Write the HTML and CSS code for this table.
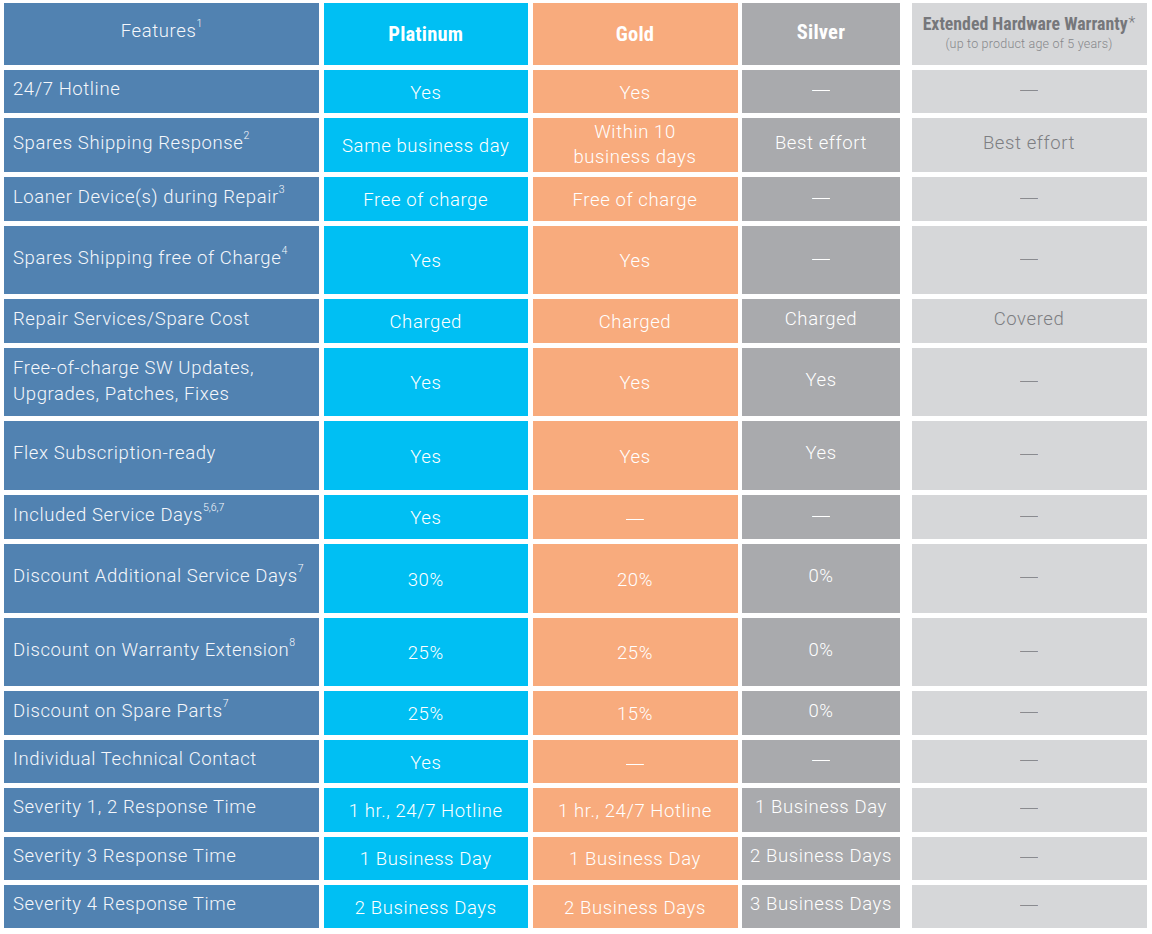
FILE: index.html
```html
<!DOCTYPE html>
<html lang="en">
<head>
<meta charset="utf-8">
<title>Service Plans Comparison</title>
<link rel="stylesheet" href="styles.css">
</head>
<body>
<div class="grid">
  <div class="cell feat head">Features<sup>1</sup></div>
  <div class="cell plat head"><span class="htitle">Platinum</span></div>
  <div class="cell gold head"><span class="htitle">Gold</span></div>
  <div class="cell silv head"><span class="htitle">Silver</span></div>
  <div class="cell ext head"><span class="etitle">Extended Hardware Warranty<span class="ast">*</span></span><span class="esub">(up to product age of 5 years)</span></div>

  <div class="cell feat">24/7 Hotline</div>
  <div class="cell plat">Yes</div>
  <div class="cell gold">Yes</div>
  <div class="cell silv"><span class="dash">—</span></div>
  <div class="cell ext"><span class="dash">—</span></div>

  <div class="cell feat">Spares Shipping Response<sup>2</sup></div>
  <div class="cell plat">Same business day</div>
  <div class="cell gold two">Within 10<br>business days</div>
  <div class="cell silv">Best effort</div>
  <div class="cell ext">Best effort</div>

  <div class="cell feat">Loaner Device(s) during Repair<sup>3</sup></div>
  <div class="cell plat">Free of charge</div>
  <div class="cell gold">Free of charge</div>
  <div class="cell silv"><span class="dash">—</span></div>
  <div class="cell ext"><span class="dash">—</span></div>

  <div class="cell feat">Spares Shipping free of Charge<sup>4</sup></div>
  <div class="cell plat">Yes</div>
  <div class="cell gold">Yes</div>
  <div class="cell silv"><span class="dash">—</span></div>
  <div class="cell ext"><span class="dash">—</span></div>

  <div class="cell feat">Repair Services/Spare Cost</div>
  <div class="cell plat">Charged</div>
  <div class="cell gold">Charged</div>
  <div class="cell silv">Charged</div>
  <div class="cell ext">Covered</div>

  <div class="cell feat two">Free-of-charge SW Updates,<br>Upgrades, Patches, Fixes</div>
  <div class="cell plat">Yes</div>
  <div class="cell gold">Yes</div>
  <div class="cell silv">Yes</div>
  <div class="cell ext"><span class="dash">—</span></div>

  <div class="cell feat">Flex Subscription-ready</div>
  <div class="cell plat">Yes</div>
  <div class="cell gold">Yes</div>
  <div class="cell silv">Yes</div>
  <div class="cell ext"><span class="dash">—</span></div>

  <div class="cell feat">Included Service Days<sup>5,6,7</sup></div>
  <div class="cell plat">Yes</div>
  <div class="cell gold"><span class="dash">—</span></div>
  <div class="cell silv"><span class="dash">—</span></div>
  <div class="cell ext"><span class="dash">—</span></div>

  <div class="cell feat">Discount Additional Service Days<sup>7</sup></div>
  <div class="cell plat">30%</div>
  <div class="cell gold">20%</div>
  <div class="cell silv">0%</div>
  <div class="cell ext"><span class="dash">—</span></div>

  <div class="cell feat">Discount on Warranty Extension<sup>8</sup></div>
  <div class="cell plat">25%</div>
  <div class="cell gold">25%</div>
  <div class="cell silv">0%</div>
  <div class="cell ext"><span class="dash">—</span></div>

  <div class="cell feat">Discount on Spare Parts<sup>7</sup></div>
  <div class="cell plat">25%</div>
  <div class="cell gold">15%</div>
  <div class="cell silv">0%</div>
  <div class="cell ext"><span class="dash">—</span></div>

  <div class="cell feat">Individual Technical Contact</div>
  <div class="cell plat">Yes</div>
  <div class="cell gold"><span class="dash">—</span></div>
  <div class="cell silv"><span class="dash">—</span></div>
  <div class="cell ext"><span class="dash">—</span></div>

  <div class="cell feat">Severity 1, 2 Response Time</div>
  <div class="cell plat">1 hr., 24/7 Hotline</div>
  <div class="cell gold">1 hr., 24/7 Hotline</div>
  <div class="cell silv">1 Business Day</div>
  <div class="cell ext"><span class="dash">—</span></div>

  <div class="cell feat">Severity 3 Response Time</div>
  <div class="cell plat">1 Business Day</div>
  <div class="cell gold">1 Business Day</div>
  <div class="cell silv">2 Business Days</div>
  <div class="cell ext"><span class="dash">—</span></div>

  <div class="cell feat">Severity 4 Response Time</div>
  <div class="cell plat">2 Business Days</div>
  <div class="cell gold">2 Business Days</div>
  <div class="cell silv">3 Business Days</div>
  <div class="cell ext"><span class="dash">—</span></div>
</div>
</body>
</html>
```

FILE: styles.css
```css
html, body {
  margin: 0;
  padding: 0;
  background: #ffffff;
}

body {
  padding: 3px 0 0 4px;
  font-family: Roboto, "Liberation Sans", Arial, sans-serif;
  font-weight: 300;
  font-size: 18.5px;
  letter-spacing: 0.6px;
  color: #ffffff;
}

.grid {
  display: grid;
  grid-template-columns: 315px 204.5px 205px 158px 242px;
  grid-template-rows: 62px 43px 54px 44px 68px 44px 68px 69px 44px 69px 68px 44px 43px 43.5px 43.5px 43px;
  column-gap: 4.5px;
  row-gap: 5px;
  width: 1143px;
}

.cell {
  display: flex;
  align-items: center;
  justify-content: center;
  text-align: center;
  line-height: 24px;
  white-space: nowrap;
}

.feat {
  background: #5182b1;
  justify-content: flex-start;
  text-align: left;
  padding: 0 0 5px 9px;
  color: #f5f7fb;
}

.plat {
  background: #00bff3;
  padding-top: 2px;
}

.gold {
  background: #f8ab7d;
  padding-top: 2px;
}

.silv {
  background: #a9aaad;
  padding-bottom: 5px;
}

.ext {
  background: #d6d7d9;
  color: #7d7e82;
  margin-left: 7px;
  padding-bottom: 5px;
}

.feat.two {
  line-height: 26px;
  padding-bottom: 3px;
}

.gold.two {
  line-height: 25px;
  padding-top: 0;
}

.head.feat {
  justify-content: center;
  text-align: center;
  padding: 0 0 6px 0;
}

.head.plat, .head.gold {
  padding: 0;
}

.head.silv {
  padding-bottom: 5px;
}

.htitle {
  font-family: "Liberation Sans Narrow", "Roboto Condensed", "Liberation Sans", sans-serif;
  font-stretch: condensed;
  font-weight: 700;
  font-size: 20.5px;
  letter-spacing: 0.2px;
}

.head.ext {
  flex-direction: column;
  padding: 0 0 4px 0;
}

.etitle {
  font-family: "Liberation Sans Narrow", "Roboto Condensed", "Liberation Sans", sans-serif;
  font-stretch: condensed;
  font-weight: 700;
  font-size: 17.8px;
  line-height: 22px;
  letter-spacing: 0;
  color: #76777b;
}

.ast {
  font-family: Roboto, "Liberation Sans", sans-serif;
  font-weight: 300;
  font-size: 16px;
  position: relative;
  top: -2px;
  margin-left: 1px;
}

.esub {
  font-size: 12.5px;
  line-height: 16px;
  letter-spacing: 0.2px;
  color: #86878b;
}

sup {
  font-size: 10.5px;
  line-height: 0;
  vertical-align: 0;
  position: relative;
  top: -7px;
  margin-left: 0;
  letter-spacing: 0;
}

.dash {
  display: inline-block;
  font-family: "Liberation Sans", Arial, sans-serif;
  font-weight: 400;
  font-size: 18px;
  letter-spacing: 0;
  transform: scaleY(0.8);
}

.ext .dash {
  color: #8a8b8f;
}
```
